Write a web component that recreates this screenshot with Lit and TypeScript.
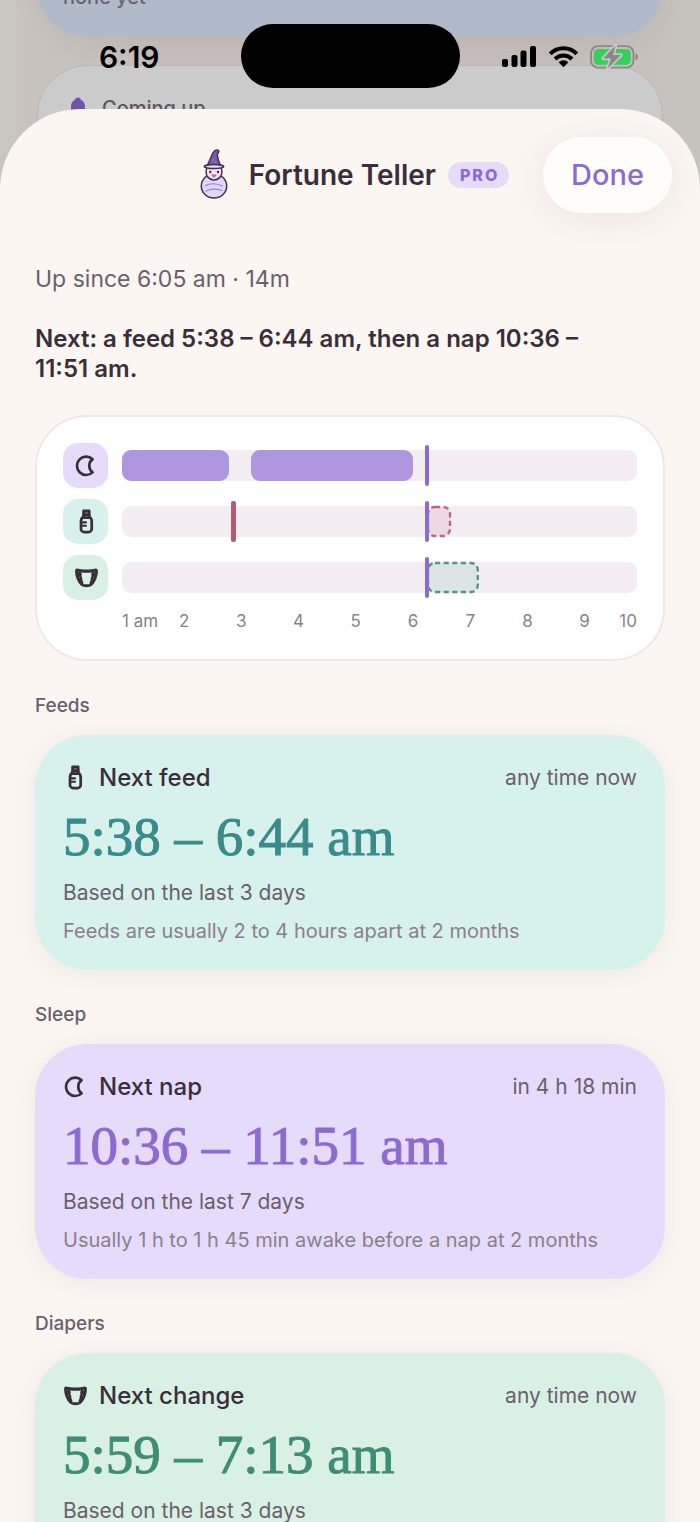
import { LitElement, html, css, svg, nothing } from "lit";
import { customElement, property } from "lit/decorators.js";

type IconName = "moon" | "bottle" | "diaper";

const ICONS = {
  moon: svg`<path d="M18.600 5.200A9.200 9.200 0 1 0 18.600 18.400A8.200 8.200 0 0 1 18.600 5.200Z" fill="none" stroke="currentColor" stroke-width="2.700" stroke-linejoin="round"/>`,
  bottle: svg`<g fill="none" stroke="currentColor" stroke-width="2.700" stroke-linejoin="round" stroke-linecap="round">
    <path d="M9.600 .9h5.600v4H9.600z" fill="#7d707c"/>
    <path d="M9.600 4.900v1.600C7.600 7.800 7 9.200 7 11.400v7.500a3.200 3.200 0 0 0 3.200 3.200h4.300a3.200 3.200 0 0 0 3.200-3.200v-7.500c0-2.200-.6-3.600-2.500-4.900v-1.600"/>
    <path d="M9.600 7.600h5.600"/>
    <path d="M7.600 12.400h4.400M7.600 15.800h4.400" stroke-width="2.100"/>
  </g>`,
  diaper: svg`<path fill="currentColor" fill-rule="evenodd" d="M3.400 2.600C8 3.900 16.800 3.900 21.400 2.600C23.100 2.500 24 3.600 23.900 5.200C23.700 11 21.400 16.600 17.800 19.800C15.800 21.600 9.200 21.600 7.200 19.800C3.600 16.600 1.300 11 1.100 5.200C1 3.600 1.700 2.500 3.400 2.600ZM7 6.400C8 7.800 8 8.800 7.400 10.200C8.400 11.400 8.600 12.600 8.200 14C9.200 15.200 9.400 16.600 9.400 18.200H15.600C15.600 16.600 15.800 15.200 16.800 14C16.400 12.600 16.600 11.400 17.600 10.200C17 8.800 17 7.800 18 6.400C14.500 6.900 10.500 6.900 7 6.400Z"/>
    <g fill="#8b808c"><circle cx="4.300" cy="6" r=".6"/><circle cx="20.700" cy="6" r=".6"/><circle cx="5.600" cy="11.400" r=".5"/><circle cx="19.400" cy="11.400" r=".5"/></g>`,
};

@customElement("ui-icon")
class UiIcon extends LitElement {
  @property() name: IconName = "moon";
  static styles = css`
    :host { display: block; width: 24px; height: 24px; flex: none; color: #392e39; }
    svg { display: block; overflow: visible; }
  `;
  render() {
    return html`<svg width="24" height="24" viewBox="0 0 24 24" aria-hidden="true">${ICONS[this.name]}</svg>`;
  }
}

/* The timeline window, in hours since midnight. */
const START = 0.915;
const SPAN = 9;
const NOW = 6.24;
const pct = (hours: number) => (hours / SPAN) * 100;
const at = (hour: number) => pct(hour - START);

interface Lane {
  icon: IconName;
  label: string;
  spans?: [number, number][];
  ticks?: number[];
  forecast?: [number, number];
}

const LANES: Lane[] = [
  { icon: "moon", label: "Sleep", spans: [[0.915, 2.785], [3.17, 6]] },
  { icon: "bottle", label: "Feeds", ticks: [2.87], forecast: [6.25, 6.67] },
  { icon: "diaper", label: "Diapers", forecast: [6.25, 7.155] },
];

@customElement("day-timeline")
class DayTimeline extends LitElement {
  static styles = css`
    :host {
      display: block;
      padding: 26px 26px 27px;
      border: 2px solid #f0e7ea;
      border-radius: 52px;
      background: #fff;
    }
    .lanes { display: grid; gap: 11px; }
    .lane { display: grid; grid-template-columns: 45px 1fr; gap: 14px; align-items: center; }
    .tile { display: grid; place-items: center; height: 45px; border-radius: 15px; }
    .moon .tile { background: #e6dbfa; }
    .bottle .tile { background: #d7f1ed; }
    .diaper .tile { background: #d9f0e4; }
    .track { position: relative; height: 31px; border-radius: 9px; background: #f3edf1; }
    .span { position: absolute; top: 0; bottom: 0; border-radius: 9px; background: #ae97df; }
    .tick, .now { position: absolute; top: -5px; bottom: -5px; border-radius: 2px; }
    .tick { width: 5px; margin-left: -3px; background: #b45a74; }
    .now { width: 4px; margin-left: -2px; background: #8c6bd1; }
    .forecast { position: absolute; top: 0; bottom: 0; }
    .forecast svg { display: block; width: 100%; height: 100%; overflow: visible; }
    .forecast rect {
      x: 1px; y: 1px;
      width: calc(100% - 2px); height: calc(100% - 2px);
      rx: 7px;
      stroke-width: 2.400px;
      stroke-dasharray: 5.200 3.400;
    }
    .bottle rect { fill: #ecd9e2; stroke: #bb6a82; }
    .diaper rect { fill: #dde4e4; stroke: #51977f; }
    .hours {
      display: grid;
      margin: 10px 0 0 59px;
      font-size: 17px;
      line-height: 22px;
      color: #8b7f8c;
      white-space: nowrap;
      text-align: center;
    }
    .hours span:first-child { text-align: left; }
    .hours span:last-child { justify-self: end; }
  `;
  render() {
    return html`
      <div class="lanes">
        ${LANES.map(
          (lane) => html`<div class="lane ${lane.icon}" role="img" aria-label=${lane.label}>
            <div class="tile"><ui-icon name=${lane.icon}></ui-icon></div>
            <div class="track">
              ${(lane.spans ?? []).map(
                ([a, b]) => html`<div class="span" style="left:${at(a)}%;width:${pct(b - a)}%"></div>`
              )}
              ${(lane.ticks ?? []).map((t) => html`<div class="tick" style="left:${at(t)}%"></div>`)}
              ${lane.forecast
                ? html`<div class="forecast" style="left:${at(lane.forecast[0])}%;width:${pct(lane.forecast[1] - lane.forecast[0])}%">
                    <svg><rect /></svg>
                  </div>`
                : nothing}
              <div class="now" style="left:${at(NOW)}%"></div>
            </div>
          </div>`
        )}
      </div>
      <div class="hours" style="grid-template-columns:minmax(0,${1.5 - START}fr) repeat(8,minmax(0,1fr)) minmax(0,${START + SPAN - 9.5}fr)">
        ${["1 am", "2", "3", "4", "5", "6", "7", "8", "9", "10"].map((h) => html`<span>${h}</span>`)}
      </div>
    `;
  }
}

interface Forecast {
  kind: "feed" | "nap" | "change";
  section: string;
  icon: IconName;
  title: string;
  when: string;
  range: string;
  basis: string;
  note: string;
}

const FORECASTS: Forecast[] = [
  {
    kind: "feed", section: "Feeds", icon: "bottle", title: "Next feed", when: "any time now",
    range: "5:38 – 6:44 am", basis: "Based on the last 3 days",
    note: "Feeds are usually 2 to 4 hours apart at 2 months",
  },
  {
    kind: "nap", section: "Sleep", icon: "moon", title: "Next nap", when: "in 4 h 18 min",
    range: "10:36 – 11:51 am", basis: "Based on the last 7 days",
    note: "Usually 1 h to 1 h 45 min awake before a nap at 2 months",
  },
  {
    kind: "change", section: "Diapers", icon: "diaper", title: "Next change", when: "any time now",
    range: "5:59 – 7:13 am", basis: "Based on the last 3 days", note: "",
  },
];

@customElement("forecast-section")
class ForecastSection extends LitElement {
  @property({ attribute: false }) item!: Forecast;
  static styles = css`
    :host { display: block; }
    h2 { margin: 0 0 17px; font-size: 19px; line-height: 24px; font-weight: 500; color: #6b5f6c; }
    .card {
      padding: 28px 28px 26px;
      border-radius: 52px;
      box-shadow: 0 4px 24px rgba(120, 80, 90, 0.09);
    }
    .feed { background: #d7f1ed; --accent: #3a8b89; }
    .nap { background: #e6dbfa; --accent: #8c6bd1; }
    .change { background: #d9f0e4; --accent: #3f8d73; }
    .head { display: flex; align-items: center; gap: 12px; }
    h3 { flex: 1; margin: 0; font-size: 24px; line-height: 30px; font-weight: 500; color: #392e39; }
    .when { font-size: 21px; line-height: 30px; color: #6b5f6c; }
    .range {
      margin: 12px 0 11px;
      font-family: "Liberation Serif", serif;
      font-size: 55px;
      line-height: 64px;
      color: var(--accent);
      -webkit-text-stroke: 1px var(--accent);
    }
    .basis, .note { margin: 0; line-height: 26px; min-height: 26px; }
    .basis { margin-bottom: 12px; font-size: 21px; color: #6b5f6c; }
    .note { font-size: 20px; color: #8b7f8c; }
  `;
  render() {
    const f = this.item;
    return html`<section>
      <h2>${f.section}</h2>
      <div class="card ${f.kind}">
        <div class="head"><ui-icon name=${f.icon}></ui-icon><h3>${f.title}</h3><span class="when">${f.when}</span></div>
        <p class="range">${f.range}</p>
        <p class="basis">${f.basis}</p>
        <p class="note">${f.note}</p>
      </div>
    </section>`;
  }
}

@customElement("app-root")
class AppRoot extends LitElement {
  static styles = css`
    :host {
      display: grid;
      grid-template: minmax(0, 1fr) / minmax(0, 1fr);
      height: 100vh;
      overflow: hidden;
      font-family: Inter, "Liberation Sans", sans-serif;
      color: #392e39;
    }
    .backdrop, .sheet, .status { grid-area: 1 / 1; }
    .backdrop {
      overflow: hidden;
      padding: 0 37px;
      background: linear-gradient(90deg, #c9c5c0, #c5bdbb 22%, #c5bdbb 78%, #c7c3be);
      color: #6a626d;
      font-size: 20px;
      font-weight: 500;
      line-height: 28px;
    }
    .under { border-radius: 50px; }
    .blue { margin-top: -140px; padding: 123px 26px 26px; background: #b0bac9; box-shadow: 0 4px 24px rgba(90, 60, 70, 0.08); }
    .grey {
      display: flex; gap: 10px; margin-top: 28px; padding: 28px 26px 60px;
      border: 1px solid #bdb5b9;
      background: #cbcbcb;
      color: #5d5560;
    }
    .sheet {
      display: flex;
      flex-direction: column;
      margin-top: 109px;
      border-radius: 80px 80px 0 0;
      background: #fbf6f2;
      overflow: hidden;
    }
    header {
      display: grid;
      grid-template-columns: 1fr auto 1fr;
      align-items: center;
      padding: 28px 28px 0 35px;
    }
    .title { grid-column: 2; display: flex; align-items: center; }
    h1 { margin: 0 12px 0 19px; font-size: 28px; line-height: 34px; font-weight: 600; }
    .pro {
      padding: 0 10px 0 12px;
      border-radius: 13px;
      background: #e6dbfa;
      color: #8c6bd1;
      font-size: 16px;
      line-height: 26px;
      font-weight: 800;
      letter-spacing: 2px;
    }
    .done {
      justify-self: end;
      padding: 0 28px;
      border: 0;
      border-radius: 38px;
      background: #fffdf9;
      box-shadow: 0 6px 36px rgba(90, 60, 50, 0.09);
      color: #8c6bd1;
      font: 500 29px/76px Inter, "Liberation Sans", sans-serif;
      cursor: pointer;
    }
    main { flex: 1; min-height: 0; overflow: auto; scrollbar-width: none; padding: 51px 35px 40px; }
    .up { margin: 0; font-size: 23px; line-height: 30px; color: #6b5f6c; }
    .next { margin: 30px 0 31px; font-size: 24px; line-height: 30px; font-weight: 600; }
    day-timeline, forecast-section { margin-bottom: 33px; }
    .status {
      display: grid;
      grid-template-columns: 1fr 219px 1fr;
      align-self: start;
      align-items: center;
      margin-top: 24px;
      color: #000;
      pointer-events: none;
    }
    .clock { padding: 2px 0 0 18px; text-align: center; font-size: 30px; font-weight: 600; }
    .island { height: 64px; border-radius: 32px; background: #000; }
    .signals { display: block; justify-self: center; margin-right: 20px; }
  `;

  render() {
    return html`
      <div class="backdrop" aria-hidden="true">
        <div class="under blue">none yet</div>
        <div class="under grey">
          <svg width="28" height="28" viewBox="0 0 28 28"><path fill="#6e54ae" d="M14 3.500C15.700 3.500 16.700 4.500 17 5.800C19.800 7 21 9.500 21 12.500V20H7V12.500C7 9.500 8.200 7 11 5.800C11.300 4.500 12.300 3.500 14 3.500Z"/></svg>
          <span>Coming up</span>
        </div>
      </div>

      <div class="sheet" role="dialog" aria-label="Fortune Teller">
        <header>
          <div class="title">
            <svg width="32" height="52" viewBox="0 0 32 52" aria-hidden="true">
              <g stroke="#41334f" stroke-width="1.500" stroke-linejoin="round" stroke-linecap="round">
                <ellipse cx="16" cy="37" rx="12.700" ry="12" fill="#e2d6fb"/>
                <path d="M8 22.500C8 17.500 11 16 16 16S24 17.500 24 22.500C24 27.500 20.600 31 16 31S8 27.500 8 22.500Z" fill="#fbdfe4"/>
                <path d="M8.600 17.500C12 12.500 13 7 15 3.800C16.400 1.600 18.500 .6 20 1.200C21.300 2 20.800 3.600 19.600 4.200C18.600 7.500 20.800 12.500 22.800 17.500Z" fill="#7a58b8"/>
                <ellipse cx="16" cy="17.600" rx="9.800" ry="2" fill="#e2d6fb"/>
              </g>
              <path d="M7.600 36.500C12 34 19 34.500 24.400 37M8 42C13 39.500 19 40 24 41.500" fill="none" stroke="#9c7fe0" stroke-width="1.300" stroke-linecap="round"/>
              <circle cx="12.200" cy="23" r="1.200" fill="#41334f"/><circle cx="20" cy="23" r="1.200" fill="#41334f"/>
              <path d="M16 29L13.600 26.600C13.200 25.200 15.200 24.800 16 26C16.800 24.800 18.800 25.200 18.400 26.600Z" fill="#9471dc"/>
              <circle cx="15.200" cy="11" r=".8" fill="#c08a7a"/><circle cx="17.600" cy="13" r=".7" fill="#c08a7a"/>
            </svg>
            <h1>Fortune Teller</h1>
            <span class="pro">PRO</span>
          </div>
          <button class="done" type="button">Done</button>
        </header>
        <main>
          <p class="up">Up since 6:05 am · 14m</p>
          <p class="next">Next: a feed 5:38 – 6:44 am, then a nap 10:36 – 11:51&nbsp;am.</p>
          <day-timeline></day-timeline>
          ${FORECASTS.map((f) => html`<forecast-section .item=${f}></forecast-section>`)}
        </main>
      </div>

      <div class="status">
        <div class="clock">6:19</div>
        <div class="island"></div>
        <svg class="signals" width="138" height="26" viewBox="0 0 138 26" role="img" aria-label="Signal, Wi-Fi, battery charging">
          <rect x="1" y="16" width="6" height="8" rx="2"/>
          <rect x="10.500" y="12" width="6" height="12" rx="2"/>
          <rect x="19.500" y="7.500" width="6" height="16.500" rx="2"/>
          <rect x="29" y="3" width="6" height="21" rx="2"/>
          <g fill="none" stroke="#000" stroke-width="4">
            <path d="M49.200 10.800A18.600 18.600 0 0 1 75.800 10.800"/>
            <path d="M54 16A11.800 11.800 0 0 1 71 16"/>
          </g>
          <path d="M62.500 24.300L57.600 19.200A7 7 0 0 1 67.400 19.200Z"/>
          <rect x="90" y="3.200" width="42.500" height="21.400" rx="7" fill="none" stroke="#8d8686" stroke-width="1.800"/>
          <path d="M134.500 10.500c3.400 1.200 3.400 5.800 0 7z" fill="#8d8686"/>
          <rect x="92.800" y="6" width="37" height="15.800" rx="4.500" fill="#35cf5b"/>
          <path d="M114.500 2.500L102 15.500H110L106.500 25.500L120 12H112Z" fill="#8d8686" stroke="#cbc8c8" stroke-width="3.400" paint-order="stroke" stroke-linejoin="round"/>
        </svg>
      </div>
    `;
  }
}
